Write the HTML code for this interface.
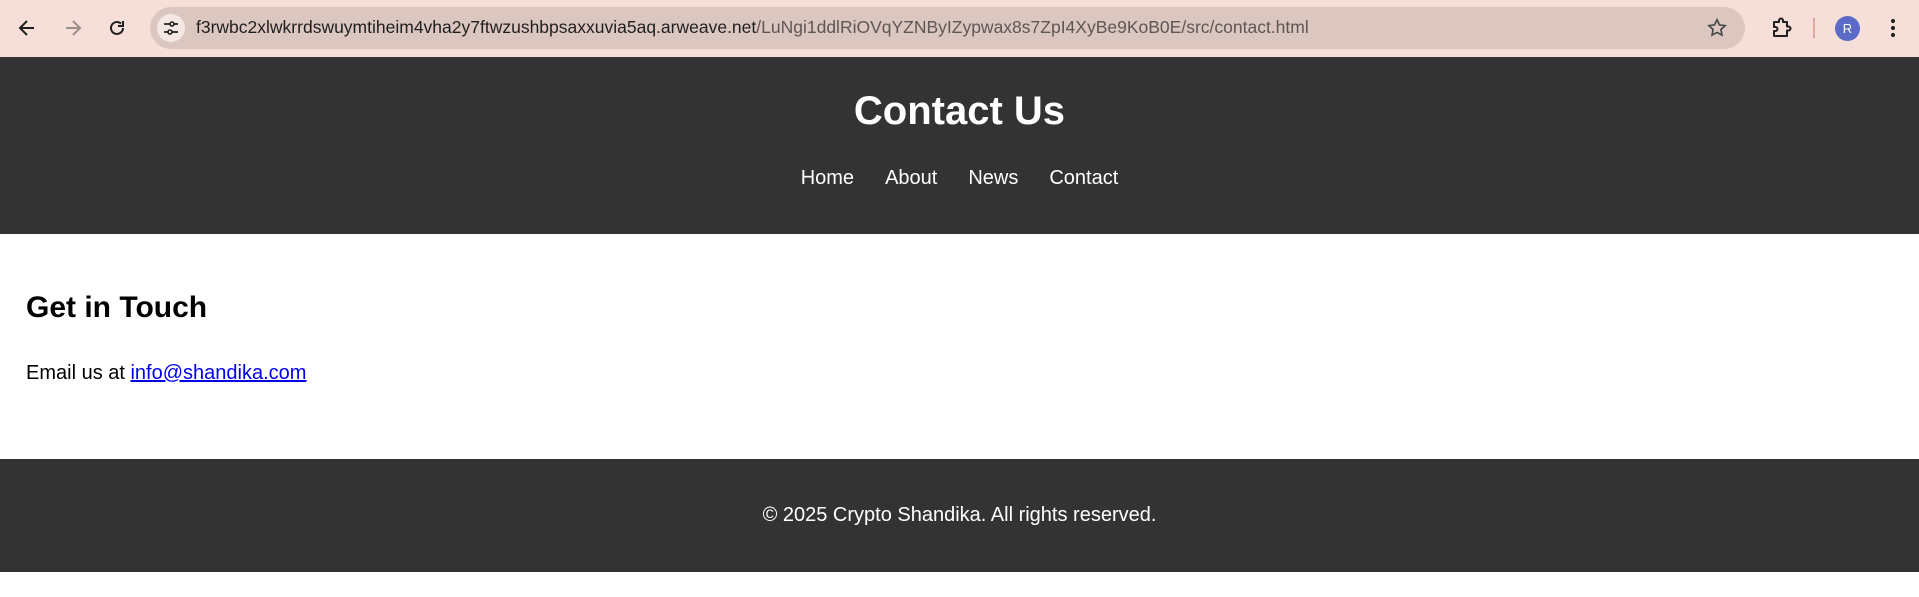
<!DOCTYPE html>
<html><head><meta charset="utf-8"><style>
*{margin:0;padding:0;box-sizing:border-box}
body{width:1919px;height:597px;overflow:hidden;background:#fff;font-family:"Liberation Sans",Arial,sans-serif;position:relative}
.tb{position:absolute;left:0;top:0;width:1919px;height:57px;background:#f6dfd8}
.omni{position:absolute;left:150px;top:7px;width:1595px;height:42px;border-radius:21px;background:#dbc7c0}
.url{position:absolute;left:196px;top:17px;font-size:17.5px;color:#1f1f1f;white-space:nowrap}
.url span{color:#5f5656}
.ab{position:absolute}
header{position:absolute;top:57px;left:0;width:1919px;height:177px;background:#333;color:#fff;text-align:center}
header h1{position:absolute;top:31px;width:100%;font-size:40px;line-height:46px}
nav{position:absolute;top:109px;width:100%;font-size:20px;line-height:24px}
nav a{color:#fff;text-decoration:none;margin:0 15.5px}
h2{position:absolute;left:26px;top:290px;font-size:30px;line-height:36px;color:#000}
p.e{position:absolute;left:26px;top:361px;font-size:20px;line-height:24px;color:#000}
p.e a{color:#00e}
footer{position:absolute;top:459px;left:0;width:1919px;height:113px;background:#333;color:#fff;text-align:center;font-size:20px;line-height:24px;padding-top:44px}
</style></head><body>
<div class="tb">
<svg class="ab" style="left:16px;top:17px" width="22" height="22" viewBox="0 0 22 22"><path d="M18 11H5M11 4l-7 7 7 7" stroke="#1f1f1f" stroke-width="2" fill="none"/></svg>
<svg class="ab" style="left:62px;top:17px" width="22" height="22" viewBox="0 0 22 22"><path d="M4 11h13M11 4l7 7-7 7" stroke="#9a8f8c" stroke-width="2" fill="none"/></svg>
<svg class="ab" style="left:106px;top:17px" width="22" height="22" viewBox="0 0 22 22"><path d="M17 11a6 6 0 1 1-2-4.5" stroke="#1f1f1f" stroke-width="2" fill="none"/><path d="M17 4v5h-5" stroke="#1f1f1f" stroke-width="2" fill="none"/></svg>
<div class="omni"></div>
<div class="ab" style="left:157px;top:14px;width:28px;height:28px;border-radius:14px;background:#f5e8e4"></div>
<svg class="ab" style="left:161px;top:18px" width="20" height="20" viewBox="0 0 20 20"><path d="M3 6h6M13 6h4M3 14h4M11 14h6" stroke="#1f1f1f" stroke-width="1.8"/><circle cx="11" cy="6" r="2" stroke="#1f1f1f" stroke-width="1.6" fill="none"/><circle cx="9" cy="14" r="2" stroke="#1f1f1f" stroke-width="1.6" fill="none"/></svg>
<div class="url">f3rwbc2xlwkrrdswuymtiheim4vha2y7ftwzushbpsaxxuvia5aq.arweave.net<span>/LuNgi1ddlRiOVqYZNByIZypwax8s7ZpI4XyBe9KoB0E/src/contact.html</span></div>
<svg class="ab" style="left:1706px;top:17px" width="22" height="22" viewBox="0 0 24 24"><path d="M12 3l2.7 5.6 6.1.8-4.5 4.2 1.1 6.1L12 16.8l-5.4 2.9 1.1-6.1L3.2 9.4l6.1-.8z" stroke="#474747" stroke-width="1.8" fill="none"/></svg>
<svg class="ab" style="left:1770px;top:16px" width="24" height="24" viewBox="0 0 24 24"><path d="M4 6h5V4.5a2 2 0 0 1 4 0V6h4v4.5h1.5a2 2 0 0 1 0 4H17V20H4v-5h1.5a2 2 0 0 0 0-4H4z" stroke="#1f1f1f" stroke-width="2" fill="none" stroke-linejoin="round"/></svg>
<div class="ab" style="left:1813px;top:18px;width:2px;height:20px;background:#e0a89a"></div>
<div class="ab" style="left:1835px;top:16px;width:25px;height:25px;border-radius:50%;background:#5a6ac6;color:#fff;font-size:13px;text-align:center;line-height:25px">R</div>
<svg class="ab" style="left:1886px;top:16px" width="14" height="24" viewBox="0 0 14 24"><circle cx="7" cy="5" r="2" fill="#1f1f1f"/><circle cx="7" cy="12" r="2" fill="#1f1f1f"/><circle cx="7" cy="19" r="2" fill="#1f1f1f"/></svg>
</div>
<header><h1>Contact Us</h1><nav><a>Home</a><a>About</a><a>News</a><a>Contact</a></nav></header>
<h2>Get in Touch</h2>
<p class="e">Email us at <a href="#">info@shandika.com</a></p>
<footer>© 2025 Crypto Shandika. All rights reserved.</footer>
</body></html>
